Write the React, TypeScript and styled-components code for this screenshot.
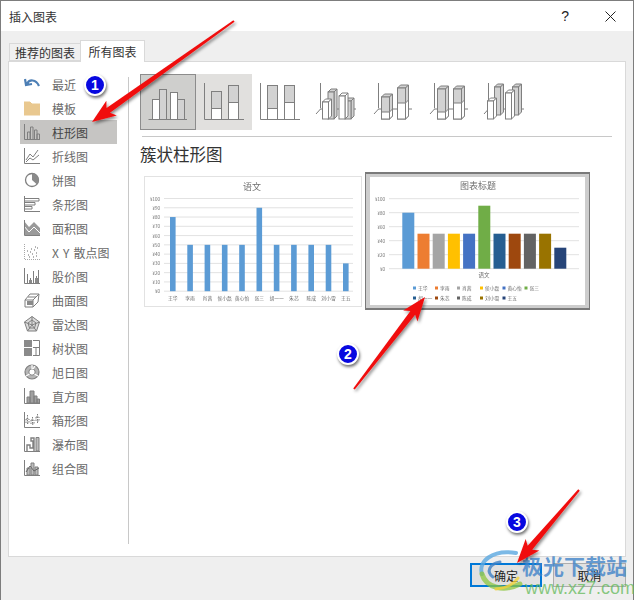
import React from 'react';
import styled, { createGlobalStyle } from 'styled-components';

const GlobalStyle = createGlobalStyle`
	html, body {
		margin: 0;
		padding: 0;
		background: #7d7d7d;
	}
	body {
		font-family: "Noto Sans CJK SC", "Liberation Sans", sans-serif;
	}
`;

const Desktop = styled.div`
	position: relative;
	width: 634px;
	height: 600px;
	padding: 1px 1px 0 1px;
	box-sizing: border-box;
	overflow: hidden;
`;

const Dialog = styled.div`
	display: flex;
	flex-direction: column;
	height: 599px;
	background: #efefef;
`;

const TitleBar = styled.div`
	display: flex;
	align-items: center;
	height: 30px;
	padding: 0 17px 0 8px;
	background: #fff;
	color: #333;
	font-size: 12px;
`;

const TitleText = styled.span`
	flex: 1;
`;

const HelpMark = styled.span`
	margin-right: 36px;
	font-family: "Liberation Sans", sans-serif;
	font-size: 14px;
	color: #222;
`;

const TabRow = styled.div`
	display: flex;
	align-items: flex-end;
	height: 30px;
	padding-left: 8px;
`;

const Tab = styled.div<{ $active?: boolean }>`
	display: flex;
	align-items: center;
	justify-content: center;
	box-sizing: border-box;
	height: ${p => (p.$active ? 22 : 18)}px;
	width: ${p => (p.$active ? 65 : 71)}px;
	margin-bottom: ${p => (p.$active ? -1 : 0)}px;
	border: 1px solid #d9d9d9;
	border-bottom: ${p => (p.$active ? 'none' : '1px solid #d9d9d9')};
	border-right: ${p => (p.$active ? '1px solid #d9d9d9' : 'none')};
	background: ${p => (p.$active ? '#fff' : '#f0f0f0')};
	color: #333;
	font-size: 12px;
	position: relative;
	z-index: 1;
`;

const Panel = styled.div`
	display: flex;
	box-sizing: border-box;
	height: 496px;
	margin: 0 7px;
	padding: 12px 0 12px 11px;
	background: #fff;
	border: 1px solid #d9d9d9;
`;

const Sidebar = styled.div`
	display: flex;
	flex-direction: column;
	box-sizing: border-box;
	width: 109px;
	padding-right: 11px;
	margin-top: 3px;
	border-right: 1px solid #c8c8c8;
`;

const SideList = styled.div`
	margin-top: -5px;
`;

const SideItem = styled.div<{ $active?: boolean }>`
	display: flex;
	align-items: center;
	gap: 12px;
	height: 24px;
	padding-left: 4px;
	background: ${p => (p.$active ? '#c6c5c3' : 'transparent')};
	color: ${p => (p.$active ? '#444' : '#6a6a6a')};
	font-size: 12px;
	word-spacing: 1.5px;
	white-space: nowrap;
`;

const Main = styled.div`
	display: flex;
	flex-direction: column;
	padding-left: 11px;
	flex: 1;
`;

const TypeRow = styled.div`
	display: flex;
`;

const TypeButton = styled.div<{ $state?: 'selected' | 'hover' }>`
	box-sizing: border-box;
	width: 56px;
	height: 56px;
	border: 1px solid ${p => (p.$state === 'selected' ? '#8c8c8c' : 'transparent')};
	background: ${p =>
		p.$state === 'selected' ? '#cfcfcd' : p.$state === 'hover' ? '#e1e0de' : 'transparent'};
`;

const Rule = styled.div`
	height: 1px;
	width: 470px;
	margin: 6px 0 0 2px;
	background: #c8c8c8;
`;

const Heading = styled.div`
	margin-top: 4px;
	height: 26px;
	line-height: 26px;
	font-size: 16.5px;
	color: #333;
`;

const Previews = styled.div`
	display: flex;
	align-items: flex-start;
	margin: 5px 0 0 4px;
`;

const PlainCard = styled.div`
	box-sizing: border-box;
	width: 218px;
	height: 131px;
	margin-top: 4px;
	border: 1px solid #e2e2e2;
	background: #fff;
`;

const PickedCard = styled.div`
	box-sizing: border-box;
	width: 225px;
	height: 138px;
	margin-left: 3px;
	padding: 3px 4px 3px 4px;
	border: 1px solid #7a7a7a;
	border-top-width: 2px;
	border-bottom-width: 2px;
	background: #cdcdcd;
`;

const ChartSvg = styled.svg`
	display: block;
	background: #fff;
	filter: blur(0.55px);
`;

const Footer = styled.div`
	display: flex;
	justify-content: flex-end;
	gap: 11px;
	padding: 6px 7px 0 0;
`;

const DialogButton = styled.div<{ $primary?: boolean }>`
	display: flex;
	align-items: center;
	justify-content: center;
	box-sizing: border-box;
	width: ${p => (p.$primary ? 72 : 73)}px;
	height: 24px;
	border: ${p => (p.$primary ? '2px solid #0078d7' : '1px solid #adadad')};
	background: #e1e1e1;
	color: #222;
	font-size: 12px;
`;

const Overlay = styled.svg`
	position: absolute;
	left: 0;
	top: 0;
	pointer-events: none;
`;

const Badge = styled.span<{ $x: number; $y: number }>`
	position: absolute;
	left: ${p => p.$x - 11}px;
	top: ${p => p.$y - 11}px;
	display: flex;
	align-items: center;
	justify-content: center;
	box-sizing: border-box;
	width: 22px;
	height: 22px;
	border: 2px solid #fff;
	border-radius: 50%;
	background: #0808e0;
	box-shadow: 1px 2px 3px rgba(0, 0, 0, 0.55);
	color: #fff;
	font-family: "Liberation Sans", sans-serif;
	font-size: 14px;
	font-weight: bold;
`;

const BrandName = styled.div`
	position: absolute;
	left: 522px;
	top: 550px;
	color: rgba(62, 130, 200, 0.78);
	font-size: 21px;
	font-weight: 700;
	letter-spacing: 0;
	white-space: nowrap;
`;

const BrandUrl = styled.div`
	position: absolute;
	left: 525px;
	top: 578px;
	color: rgba(100, 185, 90, 0.75);
	font-family: "Liberation Sans", sans-serif;
	font-size: 18px;
	white-space: nowrap;
`;

const Glyph: React.FC<{ children: React.ReactNode }> = ({ children }) => (
	<svg width="16" height="16" viewBox="0 0 16 16" fill="none" stroke="#7f7f7f" strokeWidth="1">
		{children}
	</svg>
);

const axis = <path d="M.5 0V15.5H16" />;

const sideItems: Array<{ label: string; icon: React.ReactNode }> = [
	{
		label: '最近',
		icon: <path d="M3 8 C5 3 12 3 15 10 M1 3 L2 9 L8 8" stroke="#4d7fb5" strokeWidth="2.2" />,
	},
	{
		label: '模板',
		icon: <path d="M0 2H6L8 4H16V15H0Z" fill="#e9c88f" stroke="#e9c88f" />,
	},
	{
		label: '柱形图',
		icon: (
			<>
				{axis}
				<path d="M3.5 15V8H6V15M6.5 15V3H9V15M10.5 15V6H13V15M13 15V10H15.5V15" />
			</>
		),
	},
	{
		label: '折线图',
		icon: (
			<>
				{axis}
				<path d="M2 12L6 6L9 9L14 2M2 14L6 10L9 12L15 7" />
			</>
		),
	},
	{
		label: '饼图',
		icon: (
			<>
				<circle cx="8" cy="8" r="6.5" strokeWidth="1.3" />
				<path d="M8 8V1.5A6.5 6.5 0 0 1 13 12.5Z" fill="#8a8a8a" stroke="none" />
			</>
		),
	},
	{
		label: '条形图',
		icon: (
			<>
				{axis}
				<path d="M1 2.5H15V5H1M1 6.5H11V9H1M1 10.5H8V13H1" />
			</>
		),
	},
	{
		label: '面积图',
		icon: (
			<>
				<path d="M0 1L5 7L10 2L16 8V15H0Z" fill="#9a9a9a" stroke="none" />
				<path d="M0 6L5 12L10 7L16 13" stroke="#fff" />
				{axis}
			</>
		),
	},
	{
		label: 'X Y 散点图',
		icon: (
			<>
				<path d="M.5 0V15.5H16" stroke="#a8a8a8" strokeDasharray="1 1" />
				<path
					d="M4 11h1M6 8h1M8 10h1M10 6h1M12 9h1M13 4h1M7 5h1M5 13h1M9 13h1M11 3h1M3 7h1M12 12h1"
					stroke="#666"
				/>
			</>
		),
	},
	{
		label: '股价图',
		icon: (
			<>
				{axis}
				<path d="M3.5 6V15M6.5 10V15M9.5 3V15M12.5 8V15M14.5 2V15" />
				<path d="M5 12H8V15H5ZM11 10H14V15H11Z" fill="#8a8a8a" stroke="none" />
			</>
		),
	},
	{
		label: '曲面图',
		icon: (
			<>
				<path d="M1 8L6 2H15L14 10L9 15H1Z" />
				<path d="M1 8H9L15 2M9 8V15M4 5H12" />
				<path d="M3 9H9V13H3Z" fill="#8a8a8a" stroke="none" />
			</>
		),
	},
	{
		label: '雷达图',
		icon: (
			<>
				<path d="M8 .5L15.5 6L12.5 15H3.5L.5 6Z" fill="#dcdcdc" />
				<path d="M8 .5V9M15.5 6L8 9M12.5 15L8 9M3.5 15L8 9M.5 6L8 9" />
				<path d="M8 4L12 7L10.5 12H5.5L4 7Z" />
			</>
		),
	},
	{
		label: '树状图',
		icon: (
			<>
				<path d="M0 0H8V7H0ZM0 8H8V16H0Z" fill="#8a8a8a" stroke="none" />
				<path d="M9 .5H15.5V15.5H9M9 7.5H15.5M12 8V15.5" />
			</>
		),
	},
	{
		label: '旭日图',
		icon: (
			<>
				<circle cx="8" cy="8" r="7" fill="#b5b5b5" strokeWidth="1.2" />
				<circle cx="8" cy="8" r="3.2" fill="#fff" />
				<path d="M8 1V5M2 12L5.5 10M14 12L10.5 10M11 2L9 5" stroke="#fff" strokeWidth="1.2" />
			</>
		),
	},
	{
		label: '直方图',
		icon: (
			<>
				{axis}
				<path d="M3 15V9H6V15ZM6 15V3H10V15ZM10 15V8H13V15ZM13 15V11H15.5V15Z" fill="#a0a0a0" />
			</>
		),
	},
	{
		label: '箱形图',
		icon: (
			<>
				{axis}
				<path
					d="M3.5 3V13M8.5 5V13M13.5 2V12M2 7H5V11H2ZM7 8H10V12H7ZM12 5H15V9H12Z"
					fill="#fff"
					strokeDasharray="1.5 1"
				/>
			</>
		),
	},
	{
		label: '瀑布图',
		icon: (
			<>
				{axis}
				<path d="M3 15V9H6V12H9V5H7V2H10V15" strokeWidth="1.4" />
				<path d="M12 1.5H15V15H12Z" fill="#bdbdbd" />
			</>
		),
	},
	{
		label: '组合图',
		icon: (
			<>
				{axis}
				<path d="M3 15V8H6V15ZM7 15V3H10V15ZM11 15V7H14V15Z" fill="#bdbdbd" />
				<path d="M2 12L6 6L10 11L15 8" stroke="#666" />
			</>
		),
	},
];

const Outlined = ({ x, top, bottom = 45, w = 7, fill }: { x: number; top: number; bottom?: number; w?: number; fill: string }) => (
	<rect x={x + 0.5} y={top + 0.5} width={w} height={bottom - top} fill={fill} stroke="#7f7f7f" />
);

// front face plus the top and side faces of a small 3D column
const Column3D = ({ x, top, bottom = 45, split, w = 6, fill = '#fff', d = 3 }: { x: number; top: number; bottom?: number; split?: number; w?: number; fill?: string; d?: number }) => (
	<g stroke="#7f7f7f" fill={fill}>
		<path d={`M${x} ${top}l${d} ${-d}h${w}l${-d} ${d}z`} />
		<path d={`M${x + w} ${top}l${d} ${-d}V${bottom - d}l${-d} ${d}z`} />
		<rect x={x} y={top} width={w} height={bottom - top} />
		{split !== undefined && (
			<>
				<rect x={x} y={split} width={w} height={bottom - split} fill="#fff" />
				<path d={`M${x + w} ${split}l${d} ${-d}V${bottom - d}l${-d} ${d}z`} fill="#fff" />
			</>
		)}
	</g>
);

const FlatAxis = () => <path d="M8.5 9V45.5H48" fill="none" stroke="#7f7f7f" />;
const DeepAxis = ({ x }: { x: number }) => <path d={`M${x + 0.5} 9V34M${x + 0.5} 35L${x - 4} 40M${x} 35H48`} fill="none" stroke="#7f7f7f" />;

const GRAY = '#d2d2d2';

const chartTypes: Array<React.ReactNode> = [
	<>
		<path d="M8.5 45.5H47" fill="none" stroke="#7f7f7f" />
		<Outlined x={12} top={25} fill="#fff" />
		<Outlined x={19} top={15} fill={GRAY} />
		<Outlined x={30} top={18} fill="#fff" />
		<Outlined x={37} top={25} fill={GRAY} />
	</>,
	<>
		<FlatAxis />
		<Outlined x={15} top={17} w={10} fill={GRAY} />
		<Outlined x={15} top={34} w={10} fill="#fff" />
		<Outlined x={32} top={11} w={10} fill={GRAY} />
		<Outlined x={32} top={28} w={10} fill="#fff" />
	</>,
	<>
		<FlatAxis />
		<Outlined x={15} top={11} w={10} fill={GRAY} />
		<Outlined x={15} top={34} w={10} fill="#fff" />
		<Outlined x={32} top={11} w={10} fill={GRAY} />
		<Outlined x={32} top={28} w={10} fill="#fff" />
	</>,
	<>
		<DeepAxis x={12} />
		<Column3D x={20} top={18} fill={GRAY} />
		<Column3D x={14.5} top={28} />
		<Column3D x={37} top={27} fill={GRAY} />
		<Column3D x={31} top={22} />
	</>,
	<>
		<DeepAxis x={14} />
		<Column3D x={17.5} top={23} split={38} w={8} fill={GRAY} />
		<Column3D x={33.5} top={14} split={29} w={8} fill={GRAY} />
	</>,
	<>
		<DeepAxis x={14} />
		<Column3D x={17.5} top={15} split={38} w={8} fill={GRAY} />
		<Column3D x={33.5} top={15} split={29} w={8} fill={GRAY} />
	</>,
	<>
		<DeepAxis x={12} />
		<Column3D x={18.5} top={13} bottom={41} fill={GRAY} />
		<Column3D x={11.5} top={27} />
		<Column3D x={36.5} top={13} bottom={41} fill={GRAY} />
		<Column3D x={29.5} top={19} />
	</>,
];

const names = ['王华', '李雨', '肖茜', '侯小磊', '黄心怡', '张三', '胡一一', '朱芯', '陈成', '刘小雪', '王五'];
const scores = [80, 50, 50, 50, 50, 90, 50, 50, 50, 50, 30];
const palette = ['#5b9bd5', '#ed7d31', '#a5a5a5', '#ffc000', '#4472c4', '#70ad47', '#255e91', '#9e480e', '#636363', '#997300', '#264478'];
const legendSlots = [43, 65, 87, 110, 132.5, 154.5];

const LabelText = styled.text<{ $size: number }>`
	font-size: ${p => p.$size}px;
	fill: #6e6e6e;
`;

// thumbnail of the single-colour column chart
const PlainChart = () => {
	const ticks = Array.from({ length: 11 }, (_, i) => i);
	return (
		<ChartSvg width="216" height="129">
			<LabelText $size={9} x="107" y="13" textAnchor="middle">语文</LabelText>
			{ticks.map(i => (
				<g key={i}>
					<line x1="19" x2="208" y1={21.5 + i * 9.27} y2={21.5 + i * 9.27} stroke="#e2e2e2" />
					<LabelText $size={4.5} x="15" y={23.5 + i * 9.27} textAnchor="end">
						{`¥${100 - i * 10}`}
					</LabelText>
				</g>
			))}
			{scores.map((score, i) => (
				<g key={names[i]}>
					<rect x={25 + i * 17.3} y={114.2 - score * 0.927} width="5.6" height={score * 0.927} fill="#5b9bd5" />
					<LabelText $size={4.8} x={27.8 + i * 17.3} y="123" textAnchor="middle">{names[i]}</LabelText>
				</g>
			))}
		</ChartSvg>
	);
};

// thumbnail of the multi-series column chart with a legend
const LegendChart = () => {
	const rows = [0, 1, 2, 3, 4, 5];
	return (
		<ChartSvg width="215" height="128">
			<LabelText $size={9} x="108" y="12" textAnchor="middle">图表标题</LabelText>
			{rows.map(i => (
				<g key={i}>
					<line x1="19" x2="209" y1={21.7 + i * 14} y2={21.7 + i * 14} stroke="#e2e2e2" />
					<LabelText $size={4.5} x="15" y={23.7 + i * 14} textAnchor="end">
						{`¥${100 - i * 20}`}
					</LabelText>
				</g>
			))}
			{scores.map((score, i) => (
				<rect key={names[i]} x={32.3 + i * 15.2} y={91.7 - score * 0.7} width="12" height={score * 0.7} fill={palette[i]} />
			))}
			<LabelText $size={5.5} x="114" y="100" textAnchor="middle">语文</LabelText>
			{names.map((name, i) => {
				const inFirstRow = i < 6;
				const x = legendSlots[inFirstRow ? i : i - 6];
				const y = inFirstRow ? 109.5 : 119.5;
				return (
					<g key={name}>
						<rect x={x} y={y} width="3" height="3" fill={palette[i]} />
						<LabelText $size={4.8} x={x + 5} y={y + 3.5}>{name}</LabelText>
					</g>
				);
			})}
		</ChartSvg>
	);
};

const arrows: Array<[number, number, number, number]> = [
	[234, 21, 92, 122],
	[354, 389, 425, 297],
	[579, 490, 517, 563],
];

// tapered red callout arrow from a tail point to a tip
const arrowPoints = ([x1, y1, x2, y2]: [number, number, number, number]) => {
	const len = Math.hypot(x2 - x1, y2 - y1);
	const ux = (x2 - x1) / len;
	const uy = (y2 - y1) / len;
	const at = (along: number, side: number) =>
		`${x1 + ux * along - uy * side},${y1 + uy * along + ux * side}`;
	const neck = len - 20;
	return [
		at(0, -1), at(neck, -3), at(neck - 4, -9), at(len, 0),
		at(neck - 4, 9), at(neck, 3), at(0, 1),
	].join(' ');
};

export default function App() {
	return (
		<>
			<GlobalStyle />
			<Desktop>
				<Dialog>
					<TitleBar>
						<TitleText>插入图表</TitleText>
						<HelpMark>?</HelpMark>
						<svg width="11" height="11" viewBox="0 0 11 11" stroke="#222" fill="none">
							<path d="M.5 .5L10.5 10.5M10.5 .5L.5 10.5" />
						</svg>
					</TitleBar>
					<TabRow>
						<Tab>推荐的图表</Tab>
						<Tab $active>所有图表</Tab>
					</TabRow>
					<Panel>
						<Sidebar>
							<SideList>
								{sideItems.map(item => (
									<SideItem key={item.label} $active={item.label === '柱形图'}>
										<Glyph>{item.icon}</Glyph>
										{item.label}
									</SideItem>
								))}
							</SideList>
						</Sidebar>
						<Main>
							<TypeRow>
								{chartTypes.map((drawing, i) => (
									<TypeButton key={i} $state={i === 0 ? 'selected' : i === 1 ? 'hover' : undefined}>
										<svg width="54" height="54" viewBox="1 1 54 54">{drawing}</svg>
									</TypeButton>
								))}
							</TypeRow>
							<Rule />
							<Heading>簇状柱形图</Heading>
							<Previews>
								<PlainCard>
									<PlainChart />
								</PlainCard>
								<PickedCard>
									<LegendChart />
								</PickedCard>
							</Previews>
						</Main>
					</Panel>
					<Footer>
						<DialogButton $primary>确定</DialogButton>
						<DialogButton>取消</DialogButton>
					</Footer>
				</Dialog>

				<BrandName>极光下载站</BrandName>
				<BrandUrl>www.xz7.com</BrandUrl>
				<Overlay width="634" height="600">
					<defs>
						<filter id="arrowShadow" x="-20%" y="-20%" width="140%" height="140%">
							<feDropShadow dx="1.5" dy="2" stdDeviation="1.6" floodColor="#000" floodOpacity="0.45" />
						</filter>
					</defs>
					{/* swirl logo of the download site */}
					<g fill="none" strokeLinecap="round">
						<path d="M516 553C492 549 478 562 482 574" stroke="#5aa7e0" strokeWidth="4" opacity="0.8" />
						<path d="M482 574C486 588 504 592 520 584" stroke="#8cc63f" strokeWidth="5" opacity="0.75" />
						<path d="M500 562C489 564 486 572 493 577" stroke="#3d7fc4" strokeWidth="3" opacity="0.8" />
						<path d="M496 589C506 588 514 584 518 578" stroke="#f2d23c" strokeWidth="3" opacity="0.8" />
					</g>
					{arrows.map(arrow => (
						<polygon key={arrow[0]} points={arrowPoints(arrow)} fill="#f01010" filter="url(#arrowShadow)" />
					))}
				</Overlay>
				<Badge $x={95} $y={85}>1</Badge>
				<Badge $x={348} $y={354}>2</Badge>
				<Badge $x={517} $y={522}>3</Badge>
			</Desktop>
		</>
	);
}
